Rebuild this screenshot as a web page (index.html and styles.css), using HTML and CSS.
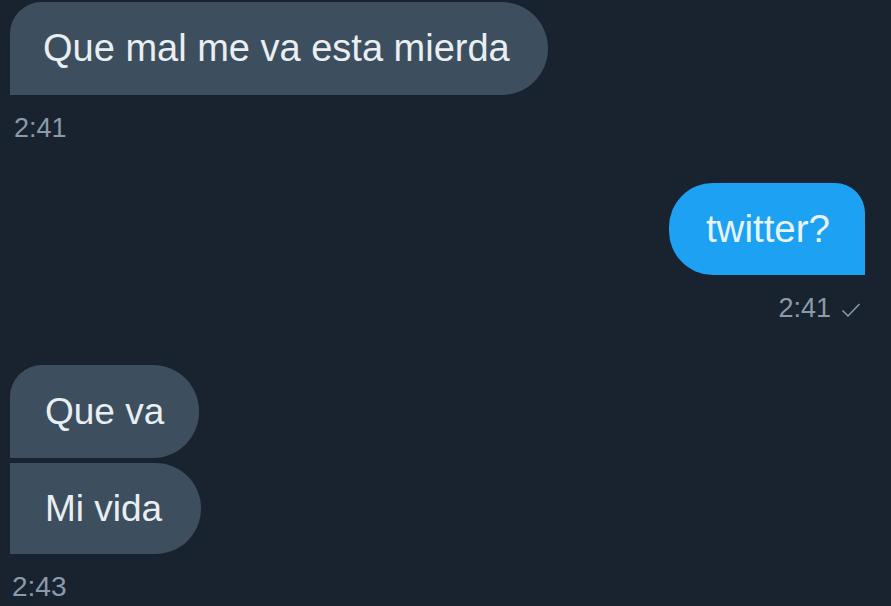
FILE: index.html
```html
<!DOCTYPE html>
<html lang="es">
<head>
<meta charset="utf-8">
<link rel="stylesheet" href="styles.css">
</head>
<body>
<div class="chat">
  <div class="msg in first-only">
    <div class="bubble in-single">Que mal me va esta mierda</div>
    <div class="time">2:41</div>
  </div>
  <div class="msg out">
    <div class="bubble out-single">twitter?</div>
    <div class="time">2:41
      <svg class="check" width="20" height="16" viewBox="0 0 20 16"><path d="M1.5 8.5 L7 14 L18.5 2" fill="none" stroke="currentColor" stroke-width="1.5"/></svg>
    </div>
  </div>
  <div class="msg in group">
    <div class="bubble in-top">Que va</div>
    <div class="bubble in-bottom">Mi vida</div>
    <div class="time">2:43</div>
  </div>
</div>
</body>
</html>
```
FILE: styles.css
```css
html, body {
  margin: 0;
  padding: 0;
  background: #19232f;
  height: 100%;
  overflow: hidden;
}
.chat {
  display: flex;
  flex-direction: column;
  padding: 2px 26px 0 10px;
  font-family: "Liberation Sans", Arial, sans-serif;
}
.msg {
  display: flex;
  flex-direction: column;
}
.msg.in { align-items: flex-start; }
.msg.out { align-items: flex-end; margin-top: 41px; }
.msg.group { margin-top: 43px; }
.bubble {
  height: 93px;
  line-height: 93px;
  font-size: 37px;
  color: #e9eef2;
  padding: 0 36px 0 33px;
  background: #3d4e5f;
  white-space: nowrap;
}
.in-single {
  font-size: 38px;
  border-radius: 32px 47px 47px 0;
  padding-right: 38px;
}
.out-single {
  background: #1da1f2;
  color: #e6f4fd;
  font-size: 38.5px;
  height: 92px;
  line-height: 92px;
  border-radius: 44px 30px 0 44px;
  padding: 0 35px 0 37px;
}
.in-top {
  border-radius: 32px 46px 46px 0;
  height: 93px;
  line-height: 93px;
  padding-right: 35px;
  padding-left: 35px;
}
.in-bottom {
  margin-top: 5px;
  border-radius: 0 46px 46px 0;
  height: 91px;
  line-height: 91px;
  padding-right: 39px;
  padding-left: 35px;
}
.time {
  font-size: 27px;
  line-height: 28px;
  color: #8a9aaa;
  margin-top: 18px;
  display: flex;
  align-items: center;
  gap: 10px;
}
.first-only .time { margin-top: 19px; padding-left: 4px; }
.out .time { padding-right: 4px; margin-top: 19px; }
.group .time { padding-left: 2px; font-size: 28px; margin-top: 19px; }
.check { color: #8a9aaa; margin-top: 3px; }
```
